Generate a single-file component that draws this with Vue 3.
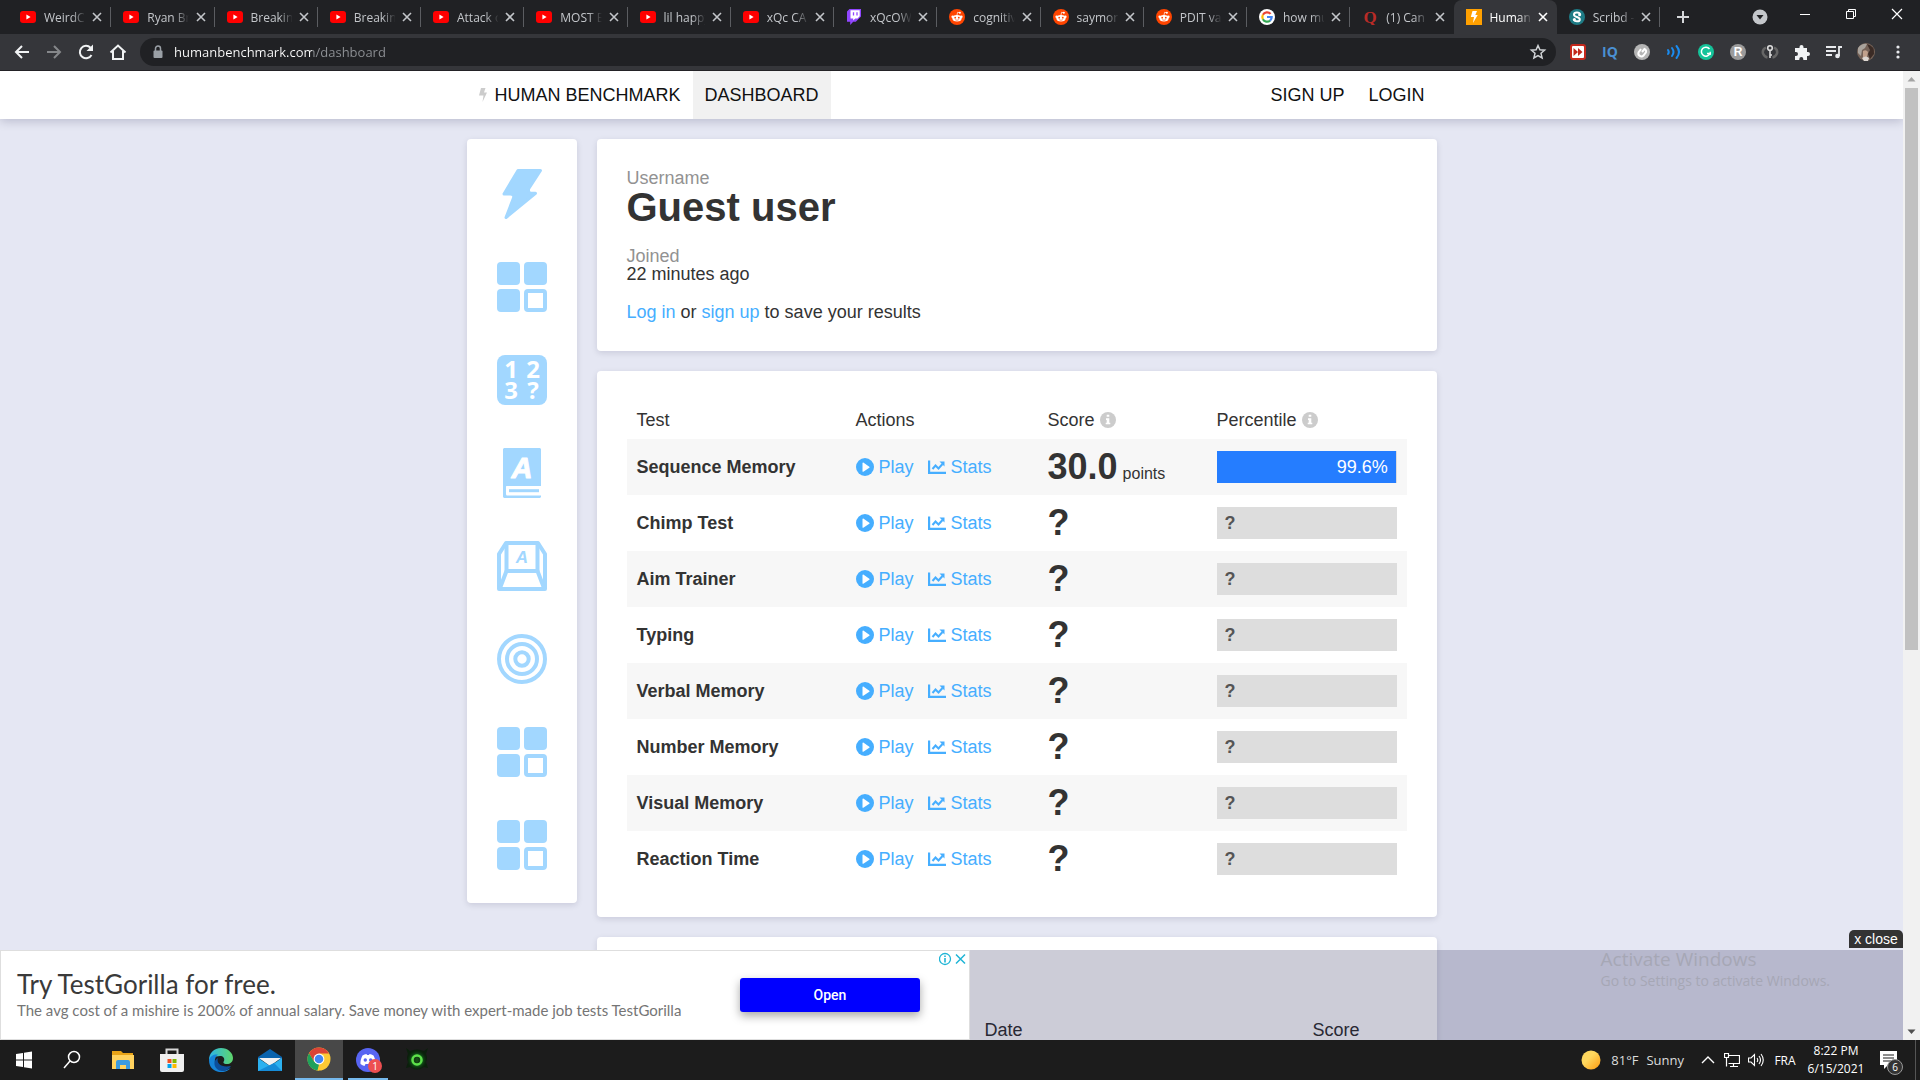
<template>
  <div class="desktop">
    <!-- shared icon shapes -->
    <svg class="sprites" aria-hidden="true">
      <defs>
        <linearGradient id="g-sun" x1="0" y1="0" x2="1" y2="1">
          <stop offset="0.4" stop-color="#ffd75e" />
          <stop offset="1" stop-color="#ff9a0c" />
        </linearGradient>
        <linearGradient id="g-edge" x1="0" y1="0" x2="1" y2="0">
          <stop offset="0" stop-color="#2cb5e8" />
          <stop offset="1" stop-color="#5fd66b" />
        </linearGradient>
        <radialGradient id="g-eye">
          <stop offset="0.3" stop-color="#18b32a" />
          <stop offset="1" stop-color="#0b2a0d" stop-opacity="0" />
        </radialGradient>
      </defs>
      <symbol id="f-youtube" viewBox="0 0 16 16">
        <rect y="2" width="16" height="12" rx="3" fill="#f00" />
        <path d="M6.4 5.5v5l4.2-2.5z" fill="#fff" />
      </symbol>
      <symbol id="f-twitch" viewBox="0 0 16 16">
        <path d="M3.5 0 1 2.6v10.2h3.2V16l3-3.2h2.6L15 7.6V0z" fill="#9146ff" />
        <path d="M4.5 1.2h9.2v6l-2.2 2.3H9.2l-2 2V9.5H4.5z" fill="#fff" />
        <path d="M7.5 3.2v3.4M11 3.2v3.4" stroke="#9146ff" stroke-width="1.3" />
      </symbol>
      <symbol id="f-reddit" viewBox="0 0 16 16">
        <circle cx="8" cy="8" r="8" fill="#ff4500" />
        <ellipse cx="8" cy="9.3" rx="4.6" ry="3.3" fill="#fff" />
        <circle cx="3.6" cy="7.7" r="1.2" fill="#fff" />
        <circle cx="12.4" cy="7.7" r="1.2" fill="#fff" />
        <circle cx="10.9" cy="3.7" r="1" fill="#fff" />
        <path d="m8 6 .6-2.700 2.2.5" fill="none" stroke="#fff" stroke-width=".7" />
        <circle cx="6.2" cy="8.7" r=".9" fill="#ff4500" />
        <circle cx="9.8" cy="8.7" r=".9" fill="#ff4500" />
        <path d="M6.200 10.700q1.800 1.200 3.600 0" fill="none" stroke="#ff4500" stroke-width=".6" />
      </symbol>
      <symbol id="f-google" viewBox="0 0 16 16">
        <circle cx="8" cy="8" r="8" fill="#fff" />
        <g fill="none" stroke-width="2.2">
          <path d="M11.600 4.900A4.700 4.700 0 0 0 3.900 5.800" stroke="#ea4335" />
          <path d="M3.900 5.800a4.700 4.700 0 0 0 0 4.400" stroke="#fbbc05" />
          <path d="M3.900 10.200a4.700 4.700 0 0 0 7.200 1.400" stroke="#34a853" />
          <path d="M11.100 11.600A4.700 4.700 0 0 0 12.700 8H8" stroke="#4285f4" />
        </g>
      </symbol>
      <symbol id="f-human" viewBox="0 0 16 16">
        <rect width="16" height="16" fill="#ffa000" />
        <path d="M6.500 2h4.500L9.300 6h2.400L7 14l1-6H4.800z" fill="#fff" />
      </symbol>
      <symbol id="f-scribd" viewBox="0 0 16 16">
        <circle cx="8" cy="8" r="8" fill="#1e7b85" />
        <path d="M11.300 5.600C10.500 2.600 5 2.800 5 5.700c0 2.600 5.800 2 5.800 4.700 0 2.500-5 2.600-6 .4" fill="none" stroke="#fff" stroke-width="2" />
        <circle cx="10.600" cy="5.700" r="1.500" fill="#fff" />
        <circle cx="5.400" cy="10.500" r="1.500" fill="#fff" />
      </symbol>

      <symbol id="e-skip" viewBox="0 0 18 18">
        <rect x="1" y="1" width="16" height="16" rx="3" fill="#c4281c" />
        <rect x="3" y="3" width="12" height="12" rx="1" fill="#fff" />
        <path d="M4.500 5v8L9 9zM9 5v8l4.500-4z" fill="#c4281c" />
      </symbol>
      <symbol id="e-ring" viewBox="0 0 18 18">
        <circle cx="9" cy="9" r="8" fill="#b5b5b5" />
        <path d="m9 9 2.500-3a2.500 2.500 0 0 1 1 4l-2 2.500a3 3 0 0 1-5-3L8 6" fill="none" stroke="#fff" stroke-width="2" />
      </symbol>
      <symbol id="e-wave" viewBox="0 0 18 18">
        <g fill="none" stroke="#1a8cf0" stroke-width="2" stroke-linecap="round">
          <path d="M3 7q1.500 2 0 4M7 5q3 4 0 8M11.500 3q5 6 0 12" />
        </g>
      </symbol>
      <symbol id="e-grammarly" viewBox="0 0 18 18">
        <circle cx="9" cy="9" r="8" fill="#15c39a" />
        <path d="M12.500 6A4.500 4.500 0 1 0 13 10.500H10" fill="none" stroke="#fff" stroke-width="1.500" />
        <path d="M13.200 8.700v3.300" stroke="#fff" stroke-width="1.300" />
      </symbol>
      <symbol id="e-r" viewBox="0 0 18 18">
        <circle cx="9" cy="9" r="8" fill="#9b9b9b" />
      </symbol>
      <symbol id="e-key" viewBox="0 0 18 18">
        <path d="M5 4.500Q1 6.500 2 10.500q1.500 3.500 4.500 4M13 4.500Q17 6.500 16 10.500q-1.500 3.500-4.500 4" fill="none" stroke="#666" stroke-width="2.500" />
        <circle cx="9" cy="5" r="2.300" fill="none" stroke="#ddd" stroke-width="1.600" />
        <path d="M9 7.500V15M9 12h2" stroke="#ddd" stroke-width="1.600" />
      </symbol>
      <symbol id="e-puzzle" viewBox="0 0 18 18">
        <path d="M2 5h4.500V4a2 2 0 0 1 4 0v1H14v4h1a2 2 0 0 1 0 4h-1v4h-3.700v-1a2 2 0 0 0-4 0v1H2v-4h1a2 2 0 0 0 0-4H2z" fill="#f1f3f4" />
      </symbol>
      <symbol id="e-queue" viewBox="0 0 18 18">
        <path d="M1 4h10M1 8h10M1 12h6" stroke="#e8eaed" stroke-width="1.800" />
        <path d="M14 13V4h3" fill="none" stroke="#e8eaed" stroke-width="1.800" />
        <circle cx="12.500" cy="13" r="2.300" fill="#e8eaed" />
      </symbol>
      <symbol id="e-avatar" viewBox="0 0 18 18">
        <circle cx="9" cy="9" r="9" fill="#756257" />
        <path d="M1 5q4-5 9-4l-2 4-3 2-1 6-3-3z" fill="#a9a39c" />
        <path d="M10 1q8 2 7 10l-4 5-2-5 2-4z" fill="#3b2b25" />
        <path d="M6 8q3-2 5 1l-1 5-4 1z" fill="#c1a18c" />
        <path d="M5 15q4-3 7 0l-1 3H7z" fill="#ddd8d2" />
      </symbol>
      <symbol id="e-menu" viewBox="0 0 18 18">
        <g fill="#e8eaed"><circle cx="9" cy="4" r="1.600" /><circle cx="9" cy="9" r="1.600" /><circle cx="9" cy="14" r="1.600" /></g>
      </symbol>

      <symbol id="t-bolt" viewBox="0 0 50 50">
        <path d="M21 1.500h22.500L31.500 20q-.5 4 3 4.300h4L9 48.500l7.500-19.500q1-4-3-4H7z" fill="#a2d7ff" stroke="#a2d7ff" stroke-width="3" stroke-linejoin="round" />
      </symbol>
      <symbol id="t-squares" viewBox="0 0 50 50">
        <g fill="#a2d7ff">
          <rect width="23" height="23" rx="4" />
          <rect x="27" width="23" height="23" rx="4" />
          <rect y="27" width="23" height="23" rx="4" />
        </g>
        <rect x="29" y="29" width="19" height="19" rx="2" fill="none" stroke="#a2d7ff" stroke-width="4" />
      </symbol>
      <symbol id="t-numbers" viewBox="0 0 50 50">
        <rect width="50" height="50" rx="8" fill="#a2d7ff" />
      </symbol>
      <symbol id="t-book" viewBox="0 0 50 50">
        <path d="M7 0h36l1 1v37H10q-1 0-1 1v7q0 1 1 1h34v2l-1 1H7l-1-1V1z" fill="#a2d7ff" />
        <path d="M44 39H10.500v7.500H44" fill="none" stroke="#fff" stroke-width="2" />
        <path d="M12 42.700h30" stroke="#a2d7ff" stroke-width="3" />
      </symbol>
      <symbol id="t-key" viewBox="0 0 50 50">
        <g fill="none" stroke="#a2d7ff" stroke-width="4" stroke-linejoin="round">
          <path d="M9 2h32l7 11v35H2V13z" />
          <path d="M9.500 2v28h31V2" />
          <path d="M9.500 30 3 47M40.500 30 47 47" />
        </g>
      </symbol>
      <symbol id="t-target" viewBox="0 0 50 50">
        <g fill="none" stroke="#a2d7ff" stroke-width="4">
          <circle cx="25" cy="25" r="23" /><circle cx="25" cy="25" r="15" /><circle cx="25" cy="25" r="6.700" />
        </g>
      </symbol>

      <symbol id="i-info" viewBox="0 0 16 16">
        <circle cx="8" cy="8" r="8" fill="#ccc" />
        <path d="M6.700 2.700h2.600v2H6.700zM6 6.300h3.300v4.400h1v1.600H5.700v-1.600h1V8H6z" fill="#fff" />
      </symbol>
      <symbol id="i-play" viewBox="0 0 18 18">
        <circle cx="9" cy="9" r="9" fill="#46aeff" />
        <path d="M6.500 5v8.400q.2.600.8.300l6-4q.6-.5 0-1L7.300 4.600q-.6-.2-.8.400z" fill="#fff" />
      </symbol>
      <symbol id="i-stats" viewBox="0 0 18 18">
        <path d="M1.100 2.500v12.300H18" fill="none" stroke="#46aeff" stroke-width="2.200" />
        <path d="m4.500 11 3-3.500 3 3L14.500 6" fill="none" stroke="#46aeff" stroke-width="2" />
        <path d="M11.500 3.500h5v5z" fill="#46aeff" />
      </symbol>

      <symbol id="k-search" viewBox="0 0 24 24">
        <circle cx="14" cy="9" r="5.500" fill="none" stroke="#fff" stroke-width="1.500" />
        <path d="m10 13-6 7" stroke="#fff" stroke-width="1.500" />
      </symbol>
      <symbol id="k-start" viewBox="0 0 24 24">
        <path d="m4 6 7-1v6.500H4zM12 4.800l8-1.200v7.900h-8zM4 12.500h7V19l-7-1zM12 12.500h8v7.900l-8-1.200z" fill="#fff" />
      </symbol>
      <symbol id="k-folder" viewBox="0 0 24 24">
        <path d="M1 3h9l2 2h10v4H1z" fill="#e8a317" />
        <path d="M1 7h22v14H1z" fill="#ffd25e" />
        <path d="M5 21v-7q0-2 2-2h10q2 0 2 2v7h-4v-4H9v4z" fill="#3a9be0" />
      </symbol>
      <symbol id="k-store" viewBox="0 0 24 24">
        <path d="M6.500 7V1.500h11V7" fill="none" stroke="#d8d8d8" stroke-width="2" />
        <path d="M0 6h24v16q0 2-2 2H2q-2 0-2-2z" fill="#f0f0f0" />
        <path d="M7.500 11h4v4h-4z" fill="#f25022" /><path d="M12.500 11h4v4h-4z" fill="#7fba00" />
        <path d="M7.500 16h4v4h-4z" fill="#00a4ef" /><path d="M12.500 16h4v4h-4z" fill="#ffb900" />
      </symbol>
      <symbol id="k-edge" viewBox="0 0 24 24">
        <path d="M0 12C0 5 5 0 12 0s12 5 12 10c0 4-3 6-6 6-4 0-4-2-3-3 1-3-1-5-4-5-5 0-9 3-11 4z" fill="url(#g-edge)" />
        <path d="M0 12c1-4 5-6 9-5.500C4 10 5 19 11 21.500c4 2 8 .5 11-2C17 27 0 26 0 12z" fill="#1684d8" />
        <path d="M9 10c-2 5 3 10 13 8-4 6-11 6-14 3-4-4-3-9 1-11z" fill="#0c4e9b" />
      </symbol>
      <symbol id="k-mail" viewBox="0 0 24 24">
        <path d="M0 9 12 1l12 8v3H0z" fill="#0a63ad" />
        <path d="M1 10h22L12 18z" fill="#f2f2f2" />
        <path d="M0 10l12 8 12-8v13H0z" fill="#2cb1f0" />
        <path d="M0 23 16 15l8 8z" fill="#168cd8" />
      </symbol>
      <symbol id="k-chrome" viewBox="0 0 24 24">
        <circle cx="12" cy="12" r="11.500" fill="#fcc934" />
        <path d="M2 6.200A11.500 11.500 0 0 1 22 6.500H12L7 14.500z" fill="#db4437" />
        <path d="M2 6.200l5 8.300 5 3-1.500 6A11.500 11.500 0 0 1 2 6.200z" fill="#1ea15c" />
        <path d="m17 14-5 9.500h-1.500L13 17z" fill="#fcc934" />
        <circle cx="12" cy="12" r="5.400" fill="#fff" /><circle cx="12" cy="12" r="4.300" fill="#4285f4" />
      </symbol>
      <symbol id="k-discord" viewBox="0 0 24 24">
        <circle cx="12" cy="12" r="12" fill="#5865f2" />
        <path d="M6.500 7.500q2-1.500 4-1.500l.5 1h2l.5-1q2 0 4 1.500 2.500 5 2 8.500-2 1.500-4 2l-1-2h-5l-1 2q-2-.5-4-2-.5-3.500 2-8.500z" fill="#fff" />
        <circle cx="9.300" cy="12" r="1.700" fill="#5865f2" /><circle cx="14.700" cy="12" r="1.700" fill="#5865f2" />
      </symbol>
      <symbol id="k-eye" viewBox="0 0 24 24">
        <path d="M1 0l4 3q7-3 14 0l4-3-2 6q2 4 0 8l2 6-4-1q-7 5-14 0l-4 1 2-6q-2-4 0-8z" fill="#0b1f0c" />
        <circle cx="12" cy="12" r="10" fill="url(#g-eye)" />
        <circle cx="12" cy="12" r="4.500" fill="#123d12" stroke="#5ee04a" stroke-width="2.500" />
        <ellipse cx="12" cy="12" rx="1.600" ry="2.800" fill="#164d16" />
      </symbol>
    </svg>

    <header class="tabstrip">
      <div class="tabs">
        <div v-for="(tab, i) in tabs" :key="i" class="tab" :class="{ active: tab.active, plain: tabs[i + 1]?.active }">
          <svg class="favicon" viewBox="0 0 16 16">
            <text v-if="tab.icon === 'quora'" class="quora" x="8" y="14">Q</text>
            <use v-else :href="'#f-' + tab.icon" />
          </svg>
          <button class="tab-title">{{ tab.title }}</button>
          <button class="tab-close" aria-label="Close tab">
            <svg viewBox="0 0 16 16"><path d="m4 4 8 8M12 4l-8 8" fill="none" stroke="currentColor" stroke-width="1.600" /></svg>
          </button>
        </div>
      </div>
      <button class="new-tab" aria-label="New tab">
        <svg viewBox="0 0 16 16"><path d="M8 2v12M2 8h12" stroke="#d5d7da" stroke-width="2" /></svg>
      </button>
      <div class="window-buttons">
        <button class="tab-search" aria-label="Search tabs">
          <svg viewBox="0 0 16 16"><circle cx="8" cy="8" r="7.500" fill="#c4c7cb" /><path d="M4.500 6h7L8 10.500z" fill="#202124" /></svg>
        </button>
        <button aria-label="Minimize"><svg viewBox="0 0 16 16"><path d="M3 8.500h10" stroke="#fff" /></svg></button>
        <button aria-label="Restore">
          <svg viewBox="0 0 16 16"><path d="M3.500 5.500h7v7h-7zM5.500 5.500v-2h7v7h-2" fill="none" stroke="#fff" /></svg>
        </button>
        <button aria-label="Close"><svg viewBox="0 0 16 16"><path d="m3 3 10 10M13 3 3 13" stroke="#fff" stroke-width="1.200" /></svg></button>
      </div>
    </header>

    <div class="toolbar">
      <button aria-label="Back"><svg viewBox="0 0 18 18"><path d="M16 9H3M9 3 3 9l6 6" fill="none" stroke="#f1f3f4" stroke-width="2" /></svg></button>
      <button aria-label="Forward"><svg viewBox="0 0 18 18"><path d="M2 9h13M9 3l6 6-6 6" fill="none" stroke="#85878a" stroke-width="2" /></svg></button>
      <button aria-label="Reload">
        <svg viewBox="0 0 18 18"><path d="M14.500 12A6.200 6.200 0 1 1 13.500 4.700" fill="none" stroke="#f1f3f4" stroke-width="2" /><path d="M16 1.500V8H9.500z" fill="#f1f3f4" /></svg>
      </button>
      <button aria-label="Home"><svg viewBox="0 0 18 18"><path d="M1.500 9.500 9 2.500l7.500 7M4 8v8h10V8" fill="none" stroke="#f1f3f4" stroke-width="2" /></svg></button>
      <div class="omnibox">
        <svg class="lock" viewBox="0 0 12 14"><path d="M3.500 6V3.500a2.500 2.500 0 0 1 5 0V6" fill="none" stroke="#9aa0a6" stroke-width="1.500" /><rect x="1.500" y="5.500" width="9" height="7.500" rx="1" fill="#9aa0a6" /></svg>
        <input v-model="url" type="text" aria-label="Address" />
        <svg class="star" viewBox="0 0 18 18"><path d="m9 2.500 1.900 4.300 4.700.4-3.600 3.100 1.100 4.600L9 12.500l-4.100 2.400L6 10.300 2.400 7.200l4.700-.4z" fill="none" stroke="#d0d3d6" stroke-width="1.500" /></svg>
      </div>
      <div class="extensions">
        <button v-for="e in extensions" :key="e" :aria-label="e">
          <svg viewBox="0 0 18 18">
            <text v-if="e === 'iq'" class="iq" x="9" y="14">IQ</text>
            <use v-else :href="'#e-' + e" />
            <text v-if="e === 'r'" class="r" x="9" y="13">R</text>
          </svg>
        </button>
      </div>
    </div>

    <div class="viewport">
      <div class="page">
        <nav class="navbar">
          <div class="nav-inner">
            <a href="#" class="brand">
              <svg viewBox="0 0 8 14"><path d="M2 0h4.500L5 4.500h3L3.500 14l1-6.500H0z" fill="#ccc" /></svg>
              HUMAN BENCHMARK
            </a>
            <a href="#" class="current">DASHBOARD</a>
            <span class="spacer"></span>
            <a href="#">SIGN UP</a>
            <a href="#">LOGIN</a>
          </div>
        </nav>

        <div class="content">
          <aside class="card test-list">
            <a v-for="(s, i) in sideIcons" :key="i" href="#" :aria-label="s">
              <svg viewBox="0 0 50 50">
                <use :href="'#t-' + s" />
                <g v-if="s === 'numbers'" class="digits">
                  <text x="14" y="23">1</text>
                  <text x="36" y="23">2</text>
                  <text x="14" y="44">3</text>
                  <text x="36" y="44">?</text>
                </g>
                <text v-else-if="s === 'book'" class="letter book" x="25" y="30">A</text>
                <text v-else-if="s === 'key'" class="letter key" x="25" y="22">A</text>
              </svg>
            </a>
          </aside>
          <main>
            <section class="card">
              <div class="label">Username</div>
              <h1>Guest user</h1>
              <div class="label">Joined</div>
              <div>22 minutes ago</div>
              <p><a href="#">Log in</a> or <a href="#">sign up</a> to save your results</p>
            </section>

            <section class="card">
              <table class="results">
                <thead>
                  <tr>
                    <th class="col-test">Test</th>
                    <th class="col-actions">Actions</th>
                    <th class="col-score">Score <svg><use href="#i-info" /></svg></th>
                    <th>Percentile <svg><use href="#i-info" /></svg></th>
                  </tr>
                </thead>
                <tbody>
                  <tr v-for="t in tests" :key="t.name">
                    <td class="name">{{ t.name }}</td>
                    <td>
                      <div class="actions">
                        <a href="#"><svg><use href="#i-play" /></svg>Play</a>
                        <a href="#"><svg><use href="#i-stats" /></svg>Stats</a>
                      </div>
                    </td>
                    <td class="score"><b>{{ t.score ?? '?' }}</b> <span v-if="t.score">points</span></td>
                    <td>
                      <div class="bar">
                        <div v-if="t.percentile" class="fill" :style="{ width: t.percentile + '%' }">{{ t.percentile }}%</div>
                        <b v-else>?</b>
                      </div>
                    </td>
                  </tr>
                </tbody>
              </table>
            </section>

            <section class="card history">
              <table>
                <thead>
                  <tr><th class="col-type"></th><th class="col-date">Date</th><th>Score</th></tr>
                </thead>
              </table>
            </section>
          </main>
        </div>

        <button class="ad-close">x close</button>
        <div class="ad-bar">
          <div class="ad">
            <div class="ad-text">
              <div class="ad-title">Try TestGorilla for free.</div>
              <div class="ad-sub">The avg cost of a mishire is 200% of annual salary. Save money with expert-made job tests TestGorilla</div>
            </div>
            <button class="ad-open">Open</button>
            <svg class="ad-choices" viewBox="0 0 30 14">
              <g fill="none" stroke="#1fb5d6" stroke-width="1.300">
                <circle cx="6" cy="7" r="5.500" /><path d="M6 6v4.500M6 3.500v1.500" stroke-width="1.600" />
                <path d="m17 2.500 9 9M26 2.500l-9 9" stroke-width="1.500" />
              </g>
            </svg>
          </div>
        </div>
        <div class="watermark">
          <div class="wm-title">Activate Windows</div>
          <div>Go to Settings to activate Windows.</div>
        </div>
      </div>
      <div class="scrollbar">
        <svg viewBox="0 0 17 17"><path d="M4.500 10.500h8l-4-4.500z" fill="#a3a3a3" /></svg>
        <div class="thumb"></div>
        <svg viewBox="0 0 17 17"><path d="M4.500 6.500h8l-4 4.500z" fill="#505050" /></svg>
      </div>
    </div>

    <footer class="taskbar">
      <button aria-label="Start"><svg><use href="#k-start" /></svg></button>
      <button aria-label="Search"><svg><use href="#k-search" /></svg></button>
      <div class="apps">
        <button v-for="a in apps" :key="a" :class="a" :aria-label="a">
          <svg><use :href="'#k-' + a" /></svg>
          <span v-if="a === 'discord'" class="badge">1</span>
        </button>
      </div>
      <span class="spacer"></span>
      <button class="weather">
        <svg viewBox="0 0 20 20"><circle cx="10" cy="10" r="9.500" fill="url(#g-sun)" /></svg>
        <span>81°F</span><span>Sunny</span>
      </button>
      <div class="tray">
        <button aria-label="Show hidden icons"><svg viewBox="0 0 16 16"><path d="m2 11 6-6 6 6" fill="none" stroke="#fff" stroke-width="1.400" /></svg></button>
        <button aria-label="Network"><svg viewBox="0 0 16 16"><path d="M4.500 3.500h11v8h-11M9.500 11.500v3M6 14.500h8M.5 1.500h4v4h-4zM2.500 5.500v9" fill="none" stroke="#fff" stroke-width="1.200" /></svg></button>
        <button aria-label="Volume"><svg viewBox="0 0 16 16"><path d="M.5 6v4H3l3.500 3.500v-11L3 6zM9 6q1.500 2 0 4M11 4q3 4 0 8M13 2q4.500 6 0 12" fill="none" stroke="#fff" stroke-width="1.100" /></svg></button>
      </div>
      <button class="lang">FRA</button>
      <button class="clock"><span>8:22 PM</span><span>6/15/2021</span></button>
      <button class="notify" aria-label="Notifications">
        <svg viewBox="0 0 24 24"><path d="M2 3h17v14h-9l-4 4v-4H2z" fill="#fff" /><path d="M5 7h11M5 10h11M5 13h8" stroke="#1c1c1c" stroke-width="1.200" /></svg>
        <span>6</span>
      </button>
    </footer>
  </div>
</template>

<script setup>
import { ref } from 'vue'

const url = ref('humanbenchmark.com/dashboard')

const tabs = [
  { icon: 'youtube', title: 'WeirdCh' },
  { icon: 'youtube', title: 'Ryan Bre' },
  { icon: 'youtube', title: 'Breaking' },
  { icon: 'youtube', title: 'Breaking' },
  { icon: 'youtube', title: 'Attack o' },
  { icon: 'youtube', title: 'MOST B' },
  { icon: 'youtube', title: 'lil happy' },
  { icon: 'youtube', title: 'xQc CA' },
  { icon: 'twitch', title: 'xQcOW' },
  { icon: 'reddit', title: 'cognitiv' },
  { icon: 'reddit', title: 'saymon' },
  { icon: 'reddit', title: 'PDIT va' },
  { icon: 'google', title: 'how mu' },
  { icon: 'quora', title: '(1) Can' },
  { icon: 'human', title: 'Human', active: true },
  { icon: 'scribd', title: 'Scribd -' }
]

const extensions = ['skip', 'iq', 'ring', 'wave', 'grammarly', 'r', 'key', 'puzzle', 'queue', 'avatar', 'menu']
const sideIcons = ['bolt', 'squares', 'numbers', 'book', 'key', 'target', 'squares', 'squares']
const apps = ['folder', 'store', 'edge', 'mail', 'chrome', 'discord', 'eye']

const tests = [
  { name: 'Sequence Memory', score: '30.0', percentile: 99.6 },
  { name: 'Chimp Test' },
  { name: 'Aim Trainer' },
  { name: 'Typing' },
  { name: 'Verbal Memory' },
  { name: 'Number Memory' },
  { name: 'Visual Memory' },
  { name: 'Reaction Time' }
]
</script>

<style>
body {
  margin: 0;
  overflow: hidden;
}
</style>

<style scoped>
.desktop {
  display: flex;
  flex-direction: column;
  height: 100vh;
  font-family: "Open Sans", "Noto Sans", sans-serif;
  font-size: 12px;
}

.sprites {
  position: absolute;
  width: 0;
  height: 0;
}

button {
  background: none;
  border: none;
  padding: 0;
  color: inherit;
  font: inherit;
  display: flex;
  align-items: center;
  justify-content: center;
  cursor: pointer;
}

a {
  text-decoration: none;
}

svg text {
  text-anchor: middle;
}

.spacer {
  flex: 1;
}

/* browser tabs */
.tabstrip {
  display: flex;
  height: 34px;
  padding-left: 8px;
  background: #202124;
  color: #c3c6ca;
}

.tabs {
  display: flex;
  flex: 1;
  min-width: 0;
}

.tab {
  position: relative;
  display: flex;
  align-items: center;
  flex: 1 1 0;
  min-width: 0;
  padding: 0 6px 0 12px;
}

.tab::after {
  content: "";
  position: absolute;
  right: 0;
  top: 7px;
  width: 1px;
  height: 20px;
  background: #5b5d61;
}

.tab.active::after,
.tab.plain::after {
  display: none;
}

.tab.active {
  background: #35363a;
  border-radius: 8px 8px 0 0;
  color: #fff;
}

.favicon {
  width: 16px;
  height: 16px;
  flex: none;
}

.quora {
  font-family: "Liberation Serif", serif;
  font-weight: bold;
  font-size: 17px;
  fill: #b92b27;
}

.tab-title {
  flex: 1;
  min-width: 0;
  margin: 0 4px 0 8px;
  justify-content: flex-start;
  overflow: hidden;
  white-space: nowrap;
  mask-image: linear-gradient(to right, #000 28px, transparent 42px);
}

.tab-close,
.tab-close svg {
  width: 16px;
  height: 16px;
}

.new-tab {
  flex: none;
  width: 46px;
}

.new-tab svg {
  width: 16px;
  height: 16px;
}

.window-buttons {
  display: flex;
  flex: none;
  padding-left: 32px;
}

.window-buttons button {
  width: 46px;
  padding-bottom: 6px;
}

.window-buttons .tab-search {
  width: 44px;
  padding-bottom: 0;
}

.window-buttons svg {
  width: 16px;
  height: 16px;
}

/* toolbar */
.toolbar {
  display: flex;
  align-items: center;
  height: 36px;
  padding: 0 6px;
  background: #35363a;
  border-bottom: 1px solid #232226;
}

.toolbar button {
  width: 32px;
  height: 28px;
}

.toolbar button svg {
  width: 18px;
  height: 18px;
}

.omnibox {
  display: flex;
  align-items: center;
  flex: 1;
  height: 28px;
  margin: 0 6px;
  padding: 0 9px 0 12px;
  border-radius: 14px;
  background: #202124;
}

.omnibox .lock {
  width: 12px;
  height: 14px;
}

.omnibox input {
  flex: 1;
  margin-left: 10px;
  padding: 0;
  border: none;
  outline: none;
  font-family: "Open Sans", "Noto Sans", sans-serif;
  font-size: 13px;
  color: transparent;
  background: linear-gradient(to right, #fff 138px, #8f9296 138px);
  background-clip: text;
}

.omnibox .star {
  width: 18px;
  height: 18px;
}

.extensions {
  display: flex;
}

.iq {
  font-weight: bold;
  font-size: 14px;
  fill: #4a90d2;
}

.r {
  font-family: "Liberation Sans", Arial, sans-serif;
  font-weight: bold;
  font-size: 12px;
  fill: #fff;
}

/* web page */
.viewport {
  display: flex;
  flex: 1;
  min-height: 0;
  font-family: "Liberation Sans", Arial, sans-serif;
  font-size: 18px;
  line-height: 18px;
  color: #333;
}

.page {
  position: relative;
  flex: 1;
  overflow: hidden;
  background: #e5e7f3;
}

.navbar {
  background: #fff;
  box-shadow: 0 2px 10px rgba(0, 0, 50, 0.2);
}

.nav-inner {
  display: flex;
  max-width: 970px;
  height: 48px;
  margin: 0 auto;
}

.nav-inner a {
  display: flex;
  align-items: center;
  padding: 0 12px;
  color: #111;
}

.nav-inner .current {
  background: #f1f1f1;
}

.brand svg {
  width: 8px;
  height: 14px;
  margin-right: 8px;
}

.content {
  display: flex;
  align-items: flex-start;
  gap: 20px;
  max-width: 970px;
  margin: 20px auto 0;
}

.card {
  background: #fff;
  border-radius: 4px;
  padding: 30px;
  box-shadow: 0 2px 6px rgba(0, 0, 50, 0.12);
}

.test-list {
  display: flex;
  flex-direction: column;
  gap: 43px;
  padding-bottom: 33px;
}

.test-list a,
.test-list svg {
  display: block;
  width: 50px;
  height: 50px;
}

.digits {
  font-family: "Noto Sans", sans-serif;
  font-weight: bold;
  font-size: 24px;
  fill: #fff;
}

.letter {
  font-weight: bold;
  font-style: italic;
}

.letter.book {
  font-size: 29px;
  fill: #fff;
  stroke: #fff;
  stroke-linejoin: round;
}

.letter.key {
  font-size: 17px;
  fill: #a2d7ff;
}

main {
  display: flex;
  flex-direction: column;
  gap: 20px;
  flex: 1;
}

.label {
  color: #929292;
}

h1 {
  margin: 0 0 20px;
  font-size: 40px;
  line-height: 40px;
}

p {
  margin: 20px 0 0;
}

p a,
.actions a {
  color: #46aeff;
}

table {
  width: 100%;
  table-layout: fixed;
  border-collapse: collapse;
}

th {
  padding: 10px;
  text-align: left;
  font-weight: normal;
}

th svg {
  width: 16px;
  height: 16px;
  vertical-align: -2px;
}

.col-test {
  width: 199px;
}

.col-actions {
  width: 172px;
}

.col-score {
  width: 149px;
}

td {
  height: 56px;
  padding: 0 10px;
}

tbody tr:nth-child(odd) {
  background: #f7f7f7;
}

.name {
  font-weight: bold;
}

.actions {
  display: flex;
  gap: 14px;
}

.actions a {
  display: flex;
  align-items: center;
}

.actions svg {
  width: 18px;
  height: 18px;
  margin-right: 5px;
}

.score b {
  font-size: 36px;
  line-height: 36px;
}

.score span {
  font-size: 16px;
}

.bar {
  height: 32px;
  line-height: 32px;
  background: #ddd;
}

.bar b {
  padding-left: 8px;
  color: #555;
}

.fill {
  box-sizing: border-box;
  padding-right: 8px;
  background: #257dff;
  color: #fff;
  text-align: right;
}

.history {
  padding-top: 74px;
}

.col-type {
  width: 328px;
}

.col-date {
  width: 308px;
}

/* sticky ad */
.ad-bar {
  position: absolute;
  left: 0;
  right: 0;
  bottom: 0;
  height: 90px;
  background: rgba(0, 0, 55, 0.2);
}

.ad {
  position: relative;
  box-sizing: border-box;
  display: flex;
  align-items: center;
  width: 970px;
  height: 90px;
  padding: 0 49px 0 16px;
  border: 1px solid #dedede;
  background: #fff;
  font-family: Lato, "Open Sans", sans-serif;
}

.ad-text {
  flex: 1;
}

.ad-title {
  font-size: 26px;
  line-height: 30px;
  color: #3a3a3a;
}

.ad-sub {
  font-size: 15px;
  line-height: 22px;
  color: #757575;
  white-space: nowrap;
}

.ad-open {
  width: 180px;
  height: 34px;
  border-radius: 3px;
  background: #00f;
  color: #fff;
  font-family: Roboto, sans-serif;
  font-size: 14px;
  font-weight: 500;
  box-shadow: 0 4px 10px rgba(0, 0, 0, 0.35);
}

.ad-choices {
  position: absolute;
  top: 1px;
  right: 0;
  width: 30px;
  height: 14px;
}

.ad-close {
  position: absolute;
  right: 0;
  bottom: 92px;
  width: 54px;
  height: 18px;
  border-radius: 5px 5px 0 0;
  background: #333;
  color: #fff;
  font-size: 14px;
}

.watermark {
  position: absolute;
  right: 73px;
  bottom: 49px;
  font-family: "Open Sans", "Noto Sans", sans-serif;
  font-size: 14px;
  line-height: 20px;
  color: #a6a7b5;
}

.wm-title {
  font-size: 19px;
  line-height: 24px;
}

.scrollbar {
  display: flex;
  flex-direction: column;
  justify-content: space-between;
  width: 17px;
  background: #f1f1f1;
}

.scrollbar svg {
  width: 17px;
  height: 17px;
}

.thumb {
  height: 58%;
  margin: 0 2px auto;
  background: #c1c1c1;
}

/* taskbar */
.taskbar {
  display: flex;
  height: 40px;
  background: #1c1c1c;
  color: #fff;
}

.taskbar > button {
  width: 48px;
}

.taskbar svg {
  width: 24px;
  height: 24px;
}

.apps {
  display: flex;
  gap: 1px;
  margin-left: 3px;
}

.apps button {
  position: relative;
  width: 48px;
}

.apps .chrome {
  background: #484848;
  border-bottom: 2px solid #76b9ed;
}

.apps .discord::after {
  content: "";
  position: absolute;
  left: 4px;
  right: 4px;
  bottom: 0;
  height: 2px;
  background: #76b9ed;
}

.badge {
  position: absolute;
  right: 10px;
  bottom: 7px;
  width: 14px;
  height: 14px;
  border-radius: 50%;
  background: #ed4f51;
  font-size: 10px;
  line-height: 14px;
  text-align: center;
}

.taskbar .weather {
  width: auto;
  gap: 8px;
  margin-right: 12px;
  font-size: 13px;
  color: #ddd;
}

.taskbar .weather svg {
  width: 20px;
  height: 20px;
  margin-right: 2px;
}

.tray {
  display: flex;
}

.tray button {
  width: 24px;
}

.tray svg {
  width: 16px;
  height: 16px;
}

.taskbar .lang {
  width: 34px;
}

.taskbar .clock {
  width: 68px;
  flex-direction: column;
  line-height: 18px;
}

.taskbar .notify {
  position: relative;
  width: 46px;
  margin-right: 4px;
  padding-right: 6px;
  border-right: 1px solid #555;
}

.notify span {
  position: absolute;
  right: 12px;
  bottom: 5px;
  width: 14px;
  height: 14px;
  border: 1px solid #999;
  border-radius: 50%;
  background: #333;
  font-size: 10px;
  line-height: 14px;
  text-align: center;
}
</style>
